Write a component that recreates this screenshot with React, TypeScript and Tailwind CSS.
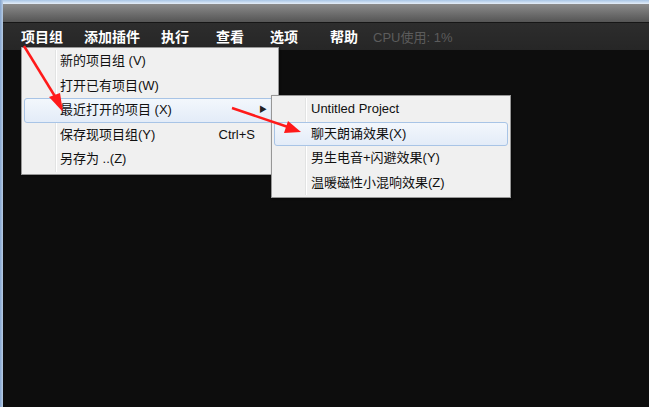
import { ReactNode } from "react";

const cjk = { fontFamily: '"Liberation Sans", "Noto Sans CJK SC", sans-serif' };

type Item = { label: string; shortcut?: string; sub?: boolean; active?: boolean };

const mainItems: Item[] = [
    { label: "新的项目组 (V)" },
    { label: "打开已有项目(W)" },
    { label: "最近打开的项目 (X)", sub: true, active: true },
    { label: "保存现项目组(Y)", shortcut: "Ctrl+S" },
    { label: "另存为 ..(Z)" },
];

const recentItems: Item[] = [
    { label: "Untitled Project" },
    { label: "聊天朗诵效果(X)", active: true },
    { label: "男生电音+闪避效果(Y)" },
    { label: "温暖磁性小混响效果(Z)" },
];

function MenuRow({ item, gutter }: { item: Item; gutter: string }) {
    return (
        <div
            className={`relative flex h-[24.5px] items-center pb-px ${
                item.active ? "rounded-[3px] border border-[#a8c4e6] bg-gradient-to-b from-[#f3f7fc] to-[#e3ecf8]" : "border border-transparent"
            }`}
        >
            <div className={`${gutter} shrink-0`} />
            <span className="flex-1 text-[13px] text-[#111]">{item.label}</span>
            {item.shortcut && <span className="mr-[20px] text-[13px] text-[#111]">{item.shortcut}</span>}
            {item.sub && <span className="mr-[8px] text-[8px] text-[#222]">▶</span>}
        </div>
    );
}

function Menu({ items, className, gutter, sep }: { items: Item[]; className: string; gutter: string; sep: string }) {
    return (
        <div className={`absolute border border-[#979797] bg-[#f0f0f0] px-[2px] pt-px pb-[2px] shadow-[1px_1px_2px_rgba(0,0,0,0.4)] ${className}`} style={cjk}>
            <div className={`absolute top-[2px] bottom-[2px] w-px bg-[#e2e3e3] ${sep}`} />
            <div className={`absolute top-[2px] bottom-[2px] w-px bg-white ${sep} translate-x-px`} />
            {items.map((it) => (
                <MenuRow key={it.label} item={it} gutter={gutter} />
            ))}
        </div>
    );
}

function TopMenu({ children, className }: { children: ReactNode; className: string }) {
    return <span className={`text-[14px] font-bold text-white ${className}`}>{children}</span>;
}

export default function App() {
    return (
        <div className="relative flex h-[407px] w-[649px] overflow-hidden bg-[#0d0d0d]" style={cjk}>
            <div className="w-[3px] shrink-0 bg-gradient-to-r from-[#86a6d0] to-[#b8cce4]" />
            <div className="flex flex-1 flex-col">
                <div className="h-[4px] bg-gradient-to-b from-[#a9c6e6] to-[#e6eef8]" />
                <div className="h-[18px] bg-gradient-to-b from-[#8c8c8c] to-[#555555]" />
                <div className="h-px bg-[#161616]" />
                <div className="flex h-[27px] items-center bg-gradient-to-b from-[#2d2d2d] to-[#262626] pt-[2px] pl-[18px]">
                    <TopMenu className="w-[63px]">项目组</TopMenu>
                    <TopMenu className="w-[77px]">添加插件</TopMenu>
                    <TopMenu className="w-[55px]">执行</TopMenu>
                    <TopMenu className="w-[54px]">查看</TopMenu>
                    <TopMenu className="w-[60px]">选项</TopMenu>
                    <TopMenu className="w-[43px]">帮助</TopMenu>
                    <span className="text-[13px] text-[#5c5c5c]">CPU使用: 1%</span>
                </div>
                <div className="flex-1 bg-[#0d0d0d]" />
            </div>

            <Menu items={mainItems} className="top-[47px] left-[21px] w-[258px]" gutter="w-[35px]" sep="left-[33px]" />
            <Menu items={recentItems} className="top-[95px] left-[271px] w-[240px]" gutter="w-[36px]" sep="left-[33px]" />

            <svg className="pointer-events-none absolute inset-0" width="649" height="407">
                <line x1="24" y1="46" x2="56" y2="98" stroke="#ff1a1a" strokeWidth="2.5" />
                <polygon points="63,112 49,97 60,93" fill="#ff1a1a" />
                <line x1="232" y1="108" x2="288" y2="127" stroke="#ff1a1a" strokeWidth="2.5" />
                <polygon points="301,132 284,133 288,121" fill="#ff1a1a" />
            </svg>
        </div>
    );
}
